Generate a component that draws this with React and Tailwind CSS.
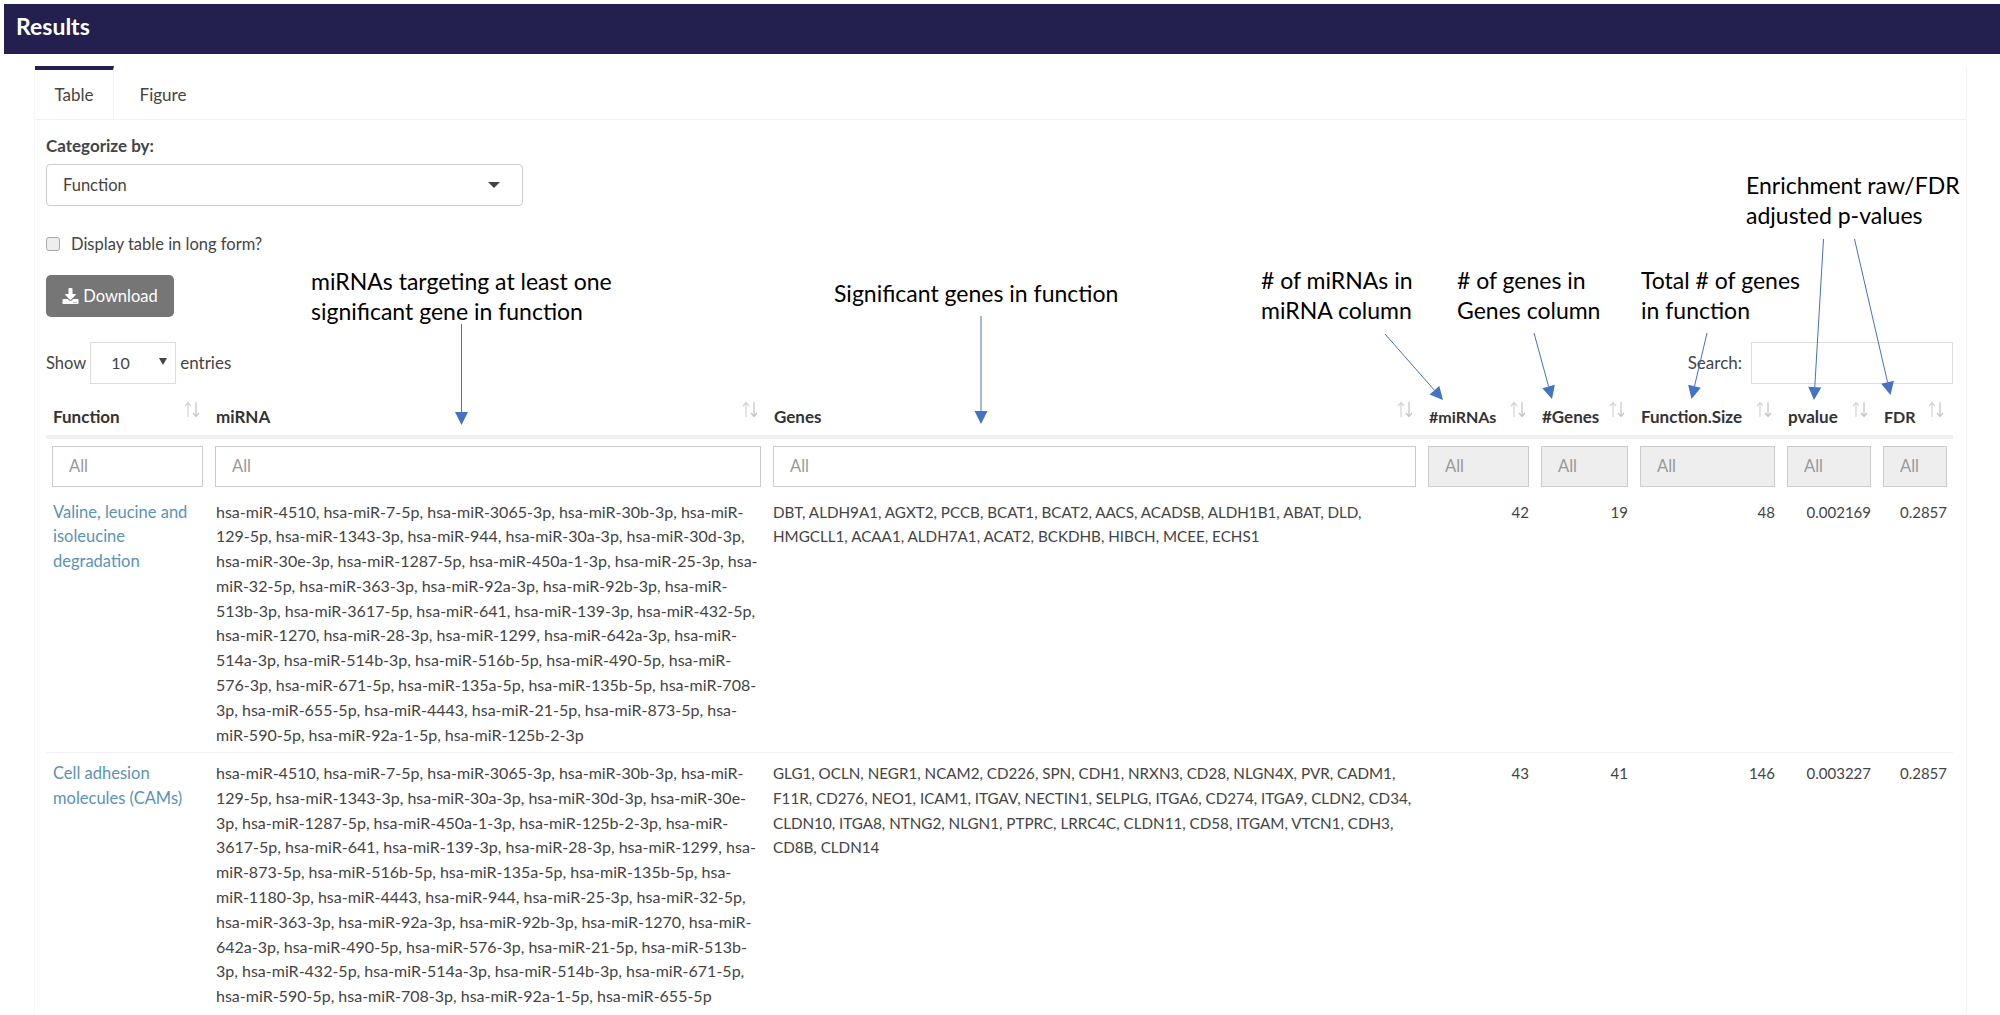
import React from 'react';
import { FaDownload } from 'react-icons/fa';

// column widths taken from the filter input positions
const columns = [
  { name: 'Function', width: 'w-[163px]', disabled: false, head: 'text-[17px]' },
  { name: 'miRNA', width: 'w-[558px]', disabled: false, head: 'text-[17px]' },
  { name: 'Genes', width: 'w-[655px]', disabled: false, head: 'text-[17px]' },
  { name: '#miRNAs', width: 'w-[113px]', disabled: true, head: 'text-[16px]' },
  { name: '#Genes', width: 'w-[99px]', disabled: true, head: 'text-[17px]' },
  { name: 'Function.Size', width: 'w-[147px]', disabled: true, head: 'text-[17px]' },
  { name: 'pvalue', width: 'w-[96px]', disabled: true, head: 'text-[17px]' },
  { name: 'FDR', width: 'w-[76px]', disabled: true, head: 'text-[16px]' },
];

const rows = [
  {
    fn: ['Valine, leucine and', 'isoleucine', 'degradation'],
    mirna: [
      'hsa-miR-4510, hsa-miR-7-5p, hsa-miR-3065-3p, hsa-miR-30b-3p, hsa-miR-',
      '129-5p, hsa-miR-1343-3p, hsa-miR-944, hsa-miR-30a-3p, hsa-miR-30d-3p,',
      'hsa-miR-30e-3p, hsa-miR-1287-5p, hsa-miR-450a-1-3p, hsa-miR-25-3p, hsa-',
      'miR-32-5p, hsa-miR-363-3p, hsa-miR-92a-3p, hsa-miR-92b-3p, hsa-miR-',
      '513b-3p, hsa-miR-3617-5p, hsa-miR-641, hsa-miR-139-3p, hsa-miR-432-5p,',
      'hsa-miR-1270, hsa-miR-28-3p, hsa-miR-1299, hsa-miR-642a-3p, hsa-miR-',
      '514a-3p, hsa-miR-514b-3p, hsa-miR-516b-5p, hsa-miR-490-5p, hsa-miR-',
      '576-3p, hsa-miR-671-5p, hsa-miR-135a-5p, hsa-miR-135b-5p, hsa-miR-708-',
      '3p, hsa-miR-655-5p, hsa-miR-4443, hsa-miR-21-5p, hsa-miR-873-5p, hsa-',
      'miR-590-5p, hsa-miR-92a-1-5p, hsa-miR-125b-2-3p',
    ],
    genes: [
      'DBT, ALDH9A1, AGXT2, PCCB, BCAT1, BCAT2, AACS, ACADSB, ALDH1B1, ABAT, DLD,',
      'HMGCLL1, ACAA1, ALDH7A1, ACAT2, BCKDHB, HIBCH, MCEE, ECHS1',
    ],
    nums: ['42', '19', '48', '0.002169', '0.2857'],
  },
  {
    fn: ['Cell adhesion', 'molecules (CAMs)'],
    mirna: [
      'hsa-miR-4510, hsa-miR-7-5p, hsa-miR-3065-3p, hsa-miR-30b-3p, hsa-miR-',
      '129-5p, hsa-miR-1343-3p, hsa-miR-30a-3p, hsa-miR-30d-3p, hsa-miR-30e-',
      '3p, hsa-miR-1287-5p, hsa-miR-450a-1-3p, hsa-miR-125b-2-3p, hsa-miR-',
      '3617-5p, hsa-miR-641, hsa-miR-139-3p, hsa-miR-28-3p, hsa-miR-1299, hsa-',
      'miR-873-5p, hsa-miR-516b-5p, hsa-miR-135a-5p, hsa-miR-135b-5p, hsa-',
      'miR-1180-3p, hsa-miR-4443, hsa-miR-944, hsa-miR-25-3p, hsa-miR-32-5p,',
      'hsa-miR-363-3p, hsa-miR-92a-3p, hsa-miR-92b-3p, hsa-miR-1270, hsa-miR-',
      '642a-3p, hsa-miR-490-5p, hsa-miR-576-3p, hsa-miR-21-5p, hsa-miR-513b-',
      '3p, hsa-miR-432-5p, hsa-miR-514a-3p, hsa-miR-514b-3p, hsa-miR-671-5p,',
      'hsa-miR-590-5p, hsa-miR-708-3p, hsa-miR-92a-1-5p, hsa-miR-655-5p',
    ],
    genes: [
      'GLG1, OCLN, NEGR1, NCAM2, CD226, SPN, CDH1, NRXN3, CD28, NLGN4X, PVR, CADM1,',
      'F11R, CD276, NEO1, ICAM1, ITGAV, NECTIN1, SELPLG, ITGA6, CD274, ITGA9, CLDN2, CD34,',
      'CLDN10, ITGA8, NTNG2, NLGN1, PTPRC, LRRC4C, CLDN11, CD58, ITGAM, VTCN1, CDH3,',
      'CD8B, CLDN14',
    ],
    nums: ['43', '41', '146', '0.003227', '0.2857'],
  },
];

// hand-placed callouts drawn on top of the screenshot
const arrows = [
  [461.5, 324, 461.5, 425],
  [981, 316, 981, 424],
  [1385, 334, 1443, 400],
  [1534, 333, 1552, 399],
  [1707, 333, 1691.5, 399],
  [1823.5, 239, 1814, 400],
  [1854.5, 239, 1890.5, 395],
];

const Arrow = ({ line }) => {
  const [x1, y1, x2, y2] = line;
  const len = Math.hypot(x2 - x1, y2 - y1);
  const ux = (x2 - x1) / len;
  const uy = (y2 - y1) / len;
  const bx = x2 - ux * 13;
  const by = y2 - uy * 13;
  const head = `${x2},${y2} ${bx - uy * 6.5},${by + ux * 6.5} ${bx + uy * 6.5},${by - ux * 6.5}`;
  return (
    <g>
      <line x1={x1} y1={y1} x2={bx} y2={by} stroke="#4472c4" strokeWidth="1" />
      <polygon points={head} fill="#4472c4" />
    </g>
  );
};

const SortIcon = () => (
  <svg className="absolute right-[9px] top-[5px]" width="16" height="17" viewBox="0 0 16 17" fill="none" stroke="#d4d4d4" strokeWidth="1.2">
    <path d="M4 16V1.5M1 5l3-3.5L7 5" />
    <path d="M12 1v14.5M9 12l3 3.5 3-3.5" stroke="#c4c4c4" />
  </svg>
);

const Lines = ({ lines, className }) => (
  <>
    {lines.map((line) => (
      <div key={line} className={`whitespace-nowrap ${className || ''}`}>{line}</div>
    ))}
  </>
);

const Note = ({ className, children }) => (
  <div className={`absolute whitespace-nowrap font-['Lato'] text-[23px] leading-[30px] text-black ${className}`}>{children}</div>
);

export default function App() {
  return (
    <div className="relative h-[1015px] overflow-hidden bg-white pt-[4px] pl-[4px] font-['Lato',sans-serif] text-[16px] leading-[24.8px] text-[#444]">
      <div className="flex h-[50px] items-center bg-[#231f4e] pb-[5px] pl-[12px] text-[23px] font-bold text-white">Results</div>

      <div className="ml-[30px] mr-[33px] mt-[12px] border-l border-r border-[#f6f6f6]">
        <div className="flex h-[54px] border-b border-[#f2f2f2] text-[17px]">
          <div className="flex w-[79px] items-center justify-center border-r border-t-4 border-r-[#f2f2f2] border-t-[#231f4e] pt-[2px]">Table</div>
          <div className="flex w-[98px] items-center justify-center pt-[6px]">Figure</div>
        </div>

        <div className="pl-[11px] pr-[13px]">
          <div className="mt-[15px] text-[17px] font-bold leading-[22px]">Categorize by:</div>
          <div className="mt-[7px] flex h-[42px] w-[477px] items-center justify-between rounded border border-[#ccc] pl-[16px] pr-[22px] text-[16.5px]">
            Function
            <span className="h-0 w-0 border-x-[6px] border-t-[6px] border-x-transparent border-t-[#444]" />
          </div>
          <label className="mt-[31px] flex h-[14px] items-center gap-[11px] text-[16.5px]">
            <input type="checkbox" className="h-[14px] w-[14px] appearance-none rounded-[3px] border border-[#aaa] bg-[#eeeeee]" />
            Display table in long form?
          </label>
          <div className="mt-[24px] flex h-[42px] w-[128px] items-center justify-center gap-[4px] rounded-[5px] bg-[#767676] text-[16.5px] text-white">
            <FaDownload className="h-[16px] w-[17px]" />
            Download
          </div>

          <div className="mt-[25px] flex h-[42px] items-center justify-between">
            <div className="flex items-center gap-[4px] text-[16.5px]">
              Show
              <div className="relative flex h-[42px] w-[86px] items-center border border-[#ddd] pl-[20px] text-[16px]">
                10
                <span className="absolute right-[8px] top-[15px] h-0 w-0 border-x-[4px] border-t-[7px] border-x-transparent border-t-[#444]" />
              </div>
              <span className="text-[17px]">entries</span>
            </div>
            <div className="flex items-center gap-[9px] text-[17px]">
              Search:
              <div className="h-[42px] w-[202px] border border-[#ddd]" />
            </div>
          </div>

          <table className="mt-[12px] w-[1907px] table-fixed border-collapse">
            <colgroup>
              {columns.map((col) => <col key={col.name} className={col.width} />)}
            </colgroup>
            <thead>
              <tr className="h-[41px] border-b-4 border-[#f0f0f0]">
                {columns.map((col) => (
                  <th key={col.name} className={`relative px-[7px] pt-[3px] text-left align-middle font-bold text-[#333] ${col.head}`}>
                    {col.name}
                    <SortIcon />
                  </th>
                ))}
              </tr>
            </thead>
            <tbody>
              <tr className="h-[55px]">
                {columns.map((col) => (
                  <td key={col.name} className="px-[6px] pt-[1px] align-middle">
                    <input
                      placeholder="All"
                      disabled={col.disabled}
                      className={`h-[41px] w-full border border-[#ccc] pl-[16px] text-[16.5px] outline-none placeholder:text-[#999] ${col.disabled ? 'bg-[#eeeeee]' : 'bg-white'}`}
                    />
                  </td>
                ))}
              </tr>
              {rows.map((row) => (
                <tr key={row.fn[0]} className="border-b border-[#f2f2f2] align-top last:border-b-0">
                  <td className="px-[7px] pb-[5px] pt-[7.5px] text-[16.5px] text-[#5b93b5]"><Lines lines={row.fn} /></td>
                  <td className="px-[7px] pb-[5px] pt-[7.5px]"><Lines lines={row.mirna} /></td>
                  <td className="px-[6px] pb-[5px] pt-[7.5px] text-[15.2px]"><Lines lines={row.genes} /></td>
                  {row.nums.map((num, i) => (
                    <td key={i} className="px-[6px] pb-[5px] pt-[7.5px] text-right text-[15px]">{num}</td>
                  ))}
                </tr>
              ))}
            </tbody>
          </table>
        </div>
      </div>

      <Note className="left-[311px] top-[266px]">miRNAs targeting at least one<br />significant gene in function</Note>
      <Note className="left-[834px] top-[278px]">Significant genes in function</Note>
      <Note className="left-[1261px] top-[265px]"># of miRNAs in<br />miRNA column</Note>
      <Note className="left-[1457px] top-[265px]"># of genes in<br />Genes column</Note>
      <Note className="left-[1641px] top-[265px]">Total # of genes<br />in function</Note>
      <Note className="left-[1746px] top-[170px]">Enrichment raw/FDR<br />adjusted p-values</Note>

      <svg className="pointer-events-none absolute left-0 top-0" width="2000" height="1015">
        {arrows.map((line) => <Arrow key={line.join('-')} line={line} />)}
      </svg>
    </div>
  );
}
